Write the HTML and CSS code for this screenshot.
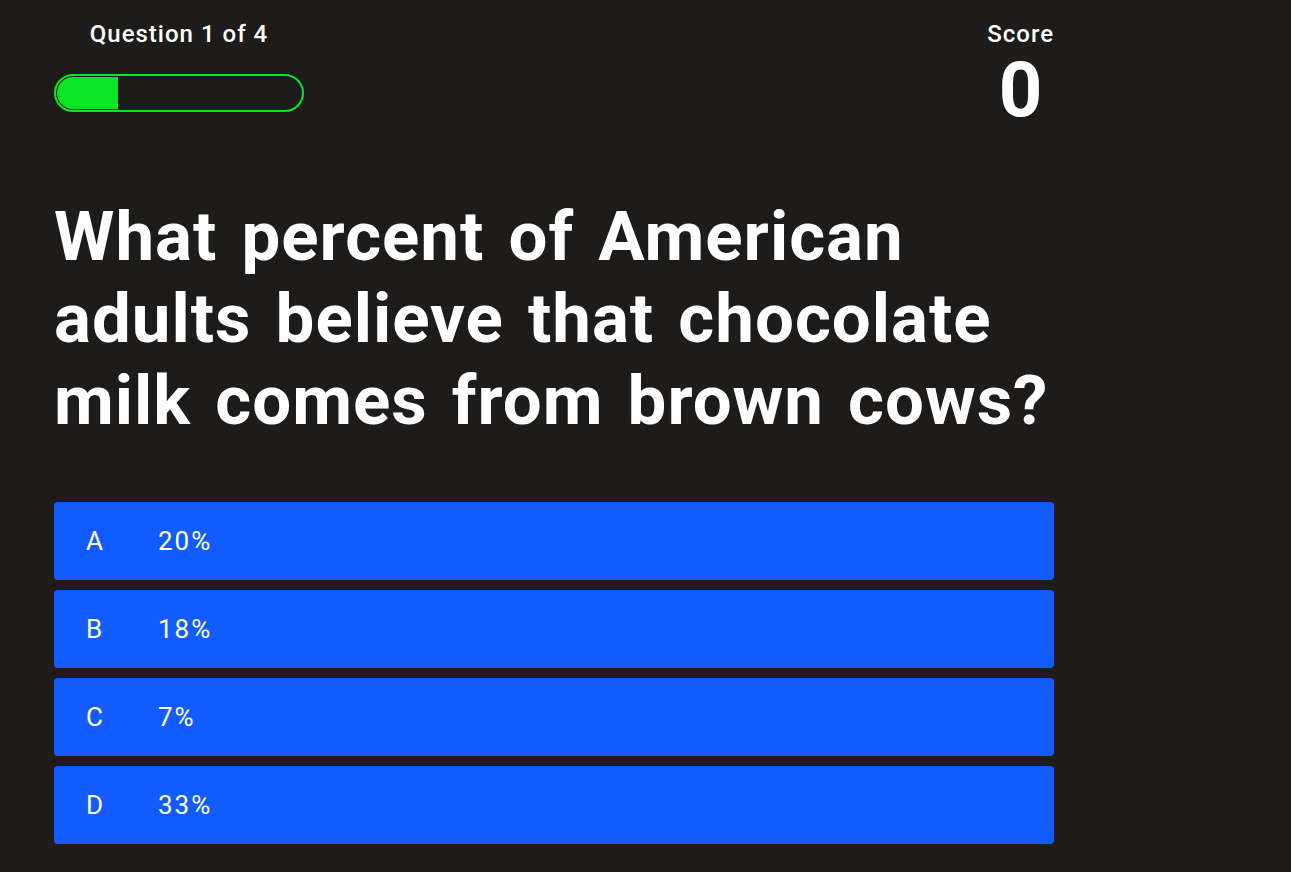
FILE: index.html
```html
<!DOCTYPE html>
<html>
<head>
    <title>Quiz</title>
    <link rel="stylesheet" href="styles.css">
</head>
<body>

<div class="quiz">
    <div class="topRow">
        <div class="progressBox">
            <div class="questionCount">Question 1 of 4</div>
            <div class="progressBar"><div class="progressFill" style="width: 25%"></div></div>
        </div>
        <div class="scoreBox">
            <div class="scoreLabel">Score</div>
            <div class="scoreValue">0</div>
        </div>
    </div>

    <h1 class="question">What percent of American<br>adults believe that chocolate<br>milk comes from brown cows?</h1>

    <div class="answers">
        <button class="answer"><span class="letter">A</span><span class="answerText">20%</span></button>
        <button class="answer"><span class="letter">B</span><span class="answerText">18%</span></button>
        <button class="answer"><span class="letter">C</span><span class="answerText">7%</span></button>
        <button class="answer"><span class="letter">D</span><span class="answerText">33%</span></button>
    </div>
</div>

</body>
</html>
```

FILE: styles.css
```css
/* General Styles */
body {
    margin: 0;
    background-color: #1d1c1b;
    color: #fff;
    font-family: "Roboto", "Liberation Sans", sans-serif;
}

.quiz {
    width: 1000px;
    margin-left: 54px;
}

/* Top Row */
.topRow {
    display: flex;
    justify-content: space-between;
    padding-top: 20px;
}

.progressBox {
    width: 250px;
}

.questionCount {
    font-size: 24px;
    font-weight: 500;
    line-height: 28px;
    letter-spacing: 1px;
    text-align: center;
    margin-bottom: 26px;
}

.progressBar {
    box-sizing: border-box;
    height: 38px;
    padding: 1px;
    border: 2px solid #0ae524;
    border-radius: 19px;
    overflow: hidden;
}

.progressFill {
    height: 100%;
    background-color: #0ae524;
    border-radius: 16px 0 0 16px;
}

.scoreBox {
    text-align: center;
}

.scoreLabel {
    font-size: 24px;
    font-weight: 500;
    line-height: 28px;
    letter-spacing: 1px;
}

.scoreValue {
    font-size: 76px;
    line-height: 84px;
    font-weight: bold;
}

/* Question */
.question {
    font-size: 69px;
    line-height: 82px;
    font-weight: bold;
    letter-spacing: 1px;
    word-spacing: 6px;
    margin: 64px 0 0;
}

/* Answers */
.answers {
    display: flex;
    flex-direction: column;
    gap: 10px;
    margin-top: 60px;
}

.answer {
    display: flex;
    align-items: center;
    height: 78px;
    padding: 0 32px;
    border: none;
    border-radius: 4px;
    background-color: #125bff;
    color: #fff;
    font-family: inherit;
    font-size: 26px;
}

.letter {
    width: 72px;
    text-align: left;
}

.answerText {
    letter-spacing: 2px;
}
```
